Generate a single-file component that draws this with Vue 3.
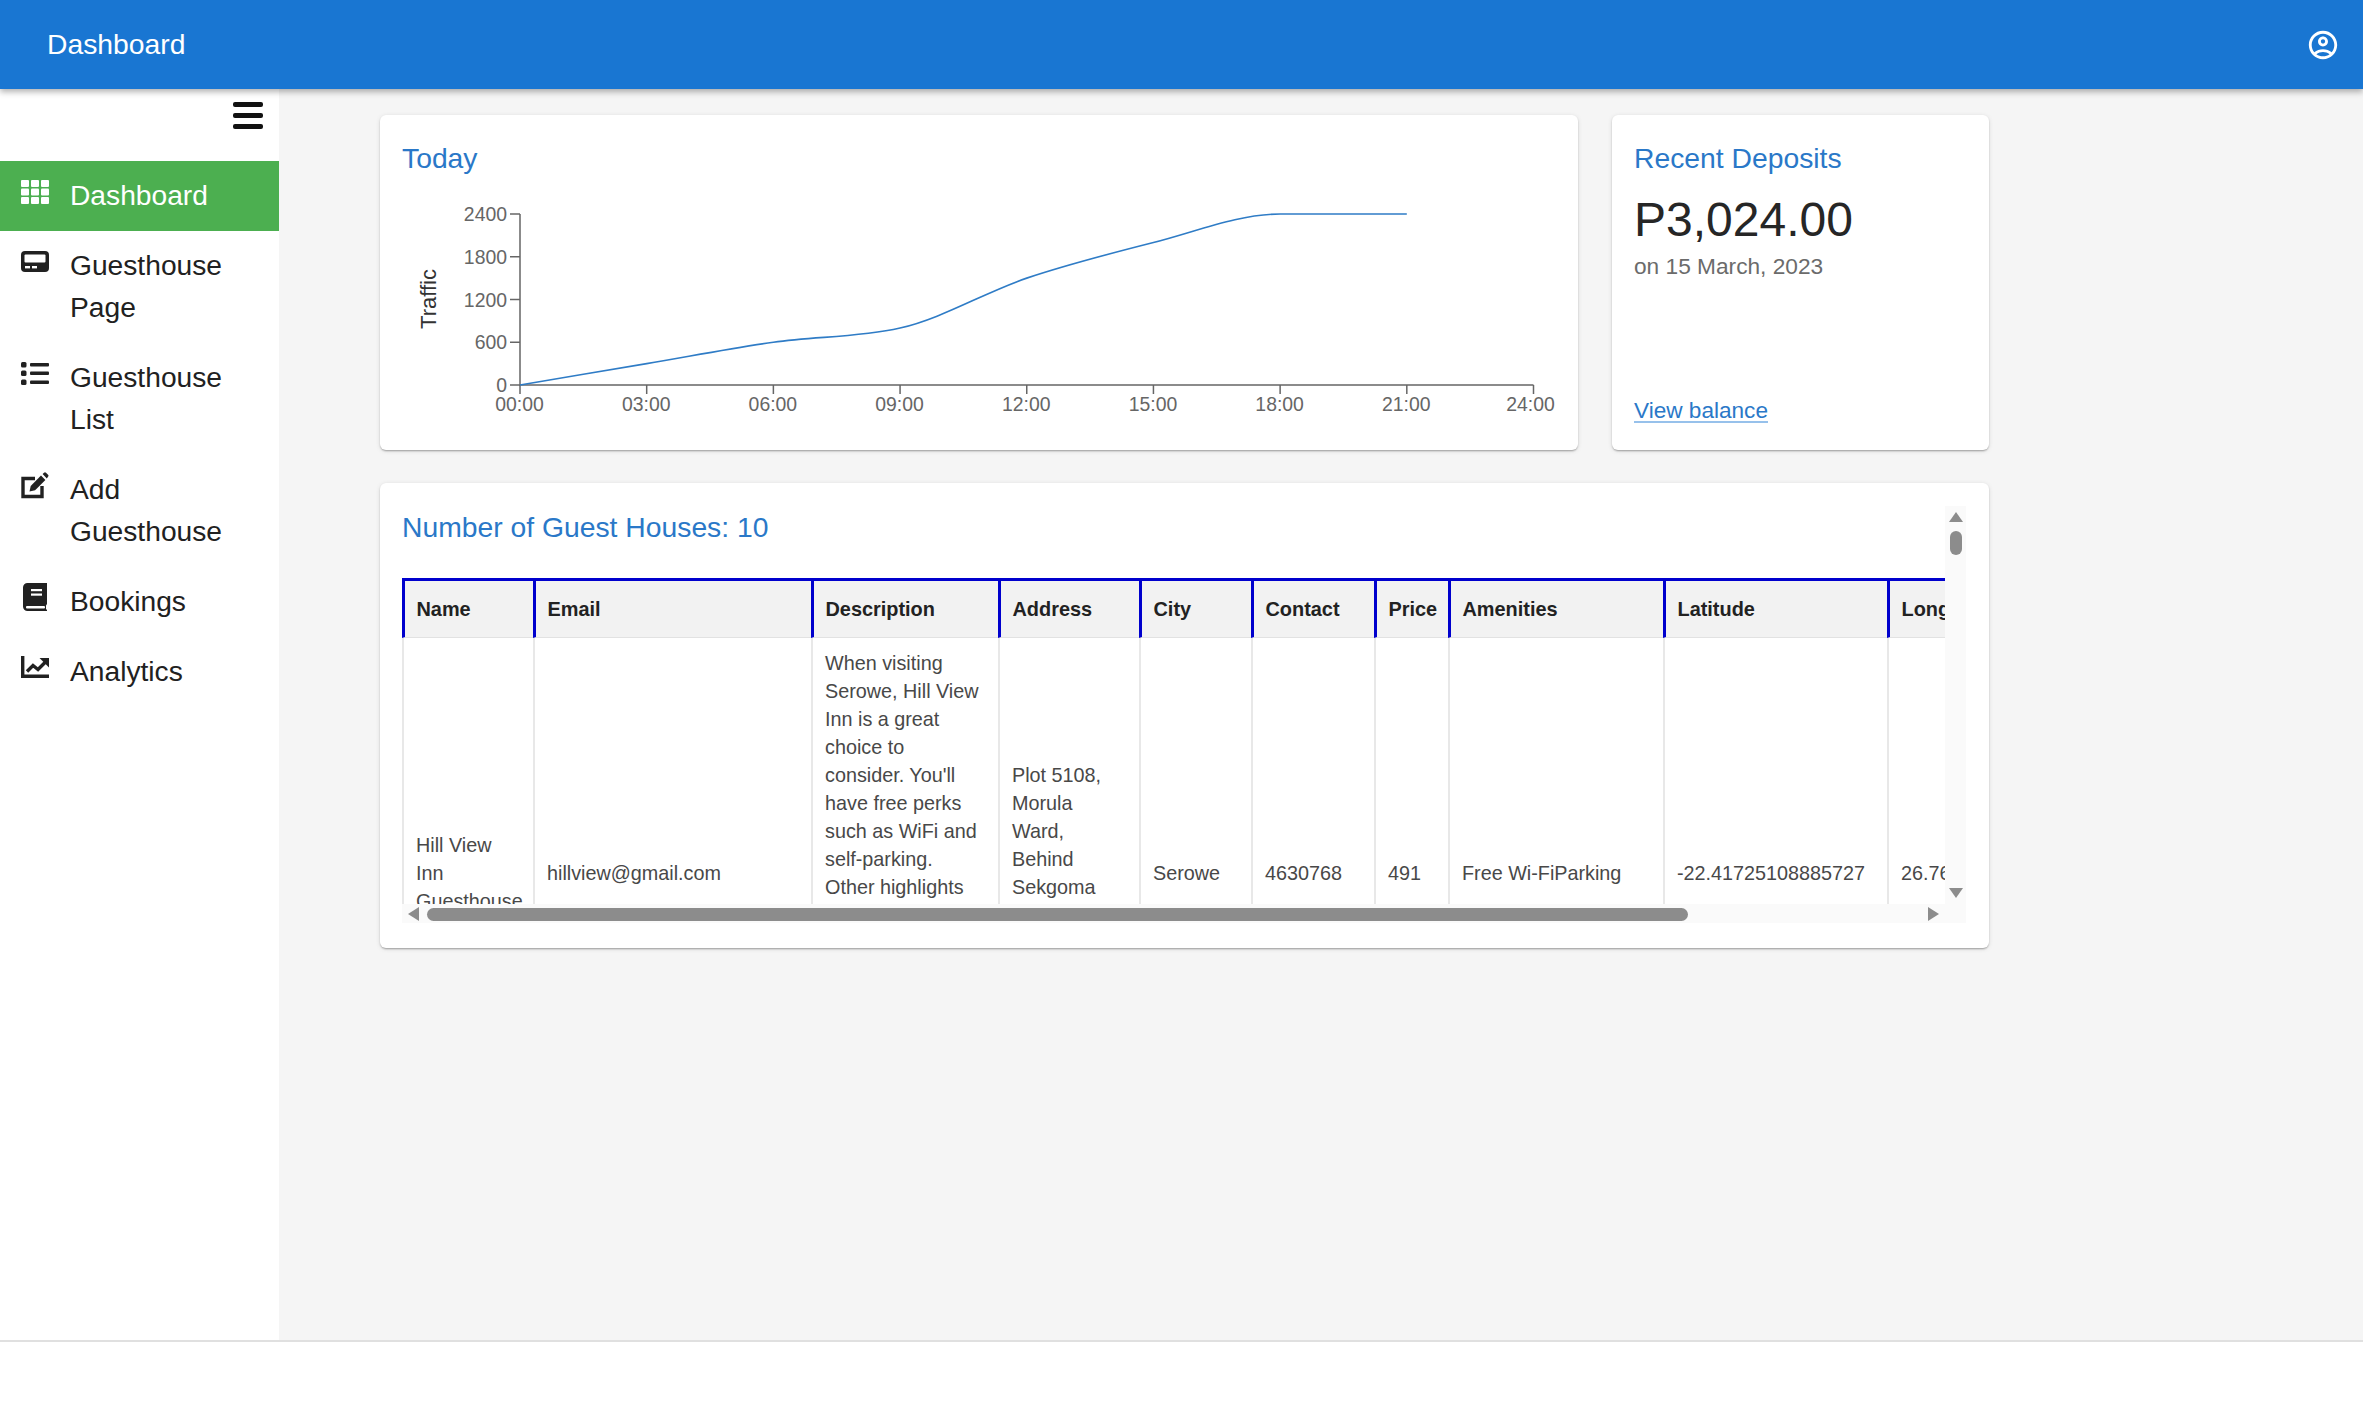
<template>
  <div class="page">
    <header class="topbar">
      <span class="topbar-title">Dashboard</span>
      <svg class="user-icon" viewBox="0 0 24 24" fill="#fff">
        <path d="M12 2C6.48 2 2 6.48 2 12s4.48 10 10 10 10-4.48 10-10S17.52 2 12 2zM7.35 18.5C8.66 17.56 10.26 17 12 17s3.34.56 4.65 1.5c-1.31.94-2.91 1.5-4.65 1.5s-3.34-.56-4.65-1.5zm10.79-1.38C16.45 15.8 14.32 15 12 15s-4.45.8-6.14 2.12C4.7 15.73 4 13.95 4 12c0-4.42 3.58-8 8-8s8 3.58 8 8c0 1.95-.7 3.73-1.86 5.12z" />
        <path d="M12 6c-1.93 0-3.5 1.57-3.5 3.5S10.07 13 12 13s3.5-1.57 3.5-3.5S13.93 6 12 6zm0 5c-.83 0-1.5-.67-1.5-1.5S11.17 8 12 8s1.5.67 1.5 1.5S12.83 11 12 11z" />
      </svg>
    </header>

    <div class="body">
      <aside class="sidebar">
        <div class="sidebar-toggle">
          <svg class="burger" viewBox="0 0 30 27" fill="#111">
            <rect x="0" y="0" width="30" height="5" rx="2" />
            <rect x="0" y="11" width="30" height="5" rx="2" />
            <rect x="0" y="22" width="30" height="5" rx="2" />
          </svg>
        </div>
        <nav>
          <a v-for="item in navItems" :key="item.label" class="nav-item" :class="{ active: item.active }">
            <svg class="nav-icon" viewBox="0 0 28 28" fill="currentColor">
              <template v-if="item.icon === 'grid'">
                <rect v-for="c in gridCells" :key="c.x + '-' + c.y" :x="c.x" :y="c.y" width="8" height="7" rx="1" />
              </template>
              <template v-else-if="item.icon === 'pager'">
                <rect x="0" y="4" width="28" height="21" rx="4" />
                <rect x="3.5" y="7.5" width="21" height="8" rx="1" fill="#fff" />
                <rect x="4" y="19" width="5" height="2.4" fill="#fff" />
                <rect x="11" y="19" width="5" height="2.4" fill="#fff" />
              </template>
              <template v-else-if="item.icon === 'list'">
                <rect x="0" y="3" width="5.5" height="5.5" rx="1.5" />
                <rect x="0" y="11.5" width="5.5" height="5.5" rx="1.5" />
                <rect x="0" y="20.5" width="5.5" height="5.5" rx="1.5" />
                <rect x="9" y="4" width="19" height="3.4" rx="1" />
                <rect x="9" y="12.6" width="19" height="3.4" rx="1" />
                <rect x="9" y="21.6" width="19" height="3.4" rx="1" />
              </template>
              <template v-else-if="item.icon === 'edit'">
                <path d="M14 7.5H2v18h19V15" fill="none" stroke="currentColor" stroke-width="3.4" />
                <path d="M8.5 20.5l1.2-5.6L20 4.6l4.4 4.4-10.3 10.3z" />
                <path d="M21.6 3l1.4-1.2a1.4 1.4 0 012 0l2 2a1.4 1.4 0 010 2L25.800 7.400z" />
              </template>
              <template v-else-if="item.icon === 'book'">
                <path d="M2 4.500A4.500 4.500 0 016.500 0H26v21l-1 1.500V26l1 1v1H6.500A4.500 4.500 0 012 23.500z" />
                <rect x="5" y="23" width="19" height="2.600" rx="1" fill="#fff" />
                <rect x="10" y="6" width="11" height="2.200" fill="#fff" />
                <rect x="10" y="10.500" width="11" height="2.200" fill="#fff" />
              </template>
              <template v-else>
                <path d="M1.700 3v20.300H28" fill="none" stroke="currentColor" stroke-width="3.400" />
                <path d="M6 18.500l6-6 5 4 8-8" fill="none" stroke="currentColor" stroke-width="3.400" />
                <path d="M18.500 5H28v9.500z" />
              </template>
            </svg>
            <span class="nav-label">{{ item.label }}</span>
          </a>
        </nav>
      </aside>

      <main class="content">
        <div class="top-row">
          <section class="card chart-card">
            <h2 class="card-title">Today</h2>
            <svg class="chart" viewBox="402 180 1154 250" width="1154" height="250">
              <g stroke="#666" stroke-width="1.500" fill="none">
                <path d="M520 214V385H1533.500" />
                <path v-for="t in yTicks" :key="'yt' + t.label" :d="`M510 ${t.y}H520`" />
                <path v-for="t in xTicks" :key="'xt' + t.label" :d="`M${t.x} 385V394`" />
              </g>
              <g class="tick-label" text-anchor="end">
                <text v-for="t in yTicks" :key="t.label" x="507" :y="t.y + 7">{{ t.label }}</text>
              </g>
              <g class="tick-label" text-anchor="middle">
                <text v-for="t in xTicks" :key="t.label" :x="t.labelX" y="411">{{ t.label }}</text>
              </g>
              <text class="axis-label" text-anchor="middle" transform="translate(436 299) rotate(-90)">Traffic</text>
              <path :d="linePath" fill="none" stroke="#2f7cc6" stroke-width="1.600" />
            </svg>
          </section>

          <section class="card deposit-card">
            <h2 class="card-title">Recent Deposits</h2>
            <div class="amount">P3,024.00</div>
            <div class="amount-date">on 15 March, 2023</div>
            <a class="balance-link">View balance</a>
          </section>
        </div>

        <section class="card guests-card">
          <div class="scroller">
            <div class="scroll-main">
              <h2 class="card-title guests-title">Number of Guest Houses: 10</h2>
              <div class="table-clip">
                <table class="guest-table">
                  <colgroup>
                    <col v-for="col in columns" :key="col.title" :style="{ width: col.width + 'px' }" />
                  </colgroup>
                  <thead>
                    <tr>
                      <th v-for="col in columns" :key="col.title">{{ col.title }}</th>
                    </tr>
                  </thead>
                  <tbody>
                    <tr v-for="row in rows" :key="row.email">
                      <td v-for="col in columns" :key="col.key">{{ row[col.key] }}</td>
                    </tr>
                  </tbody>
                </table>
              </div>
              <div class="hbar">
                <span class="arrow arrow-left"></span>
                <span class="hthumb"></span>
                <span class="arrow arrow-right"></span>
              </div>
            </div>
            <div class="vbar">
              <span class="arrow arrow-up"></span>
              <span class="vthumb"></span>
              <span class="arrow arrow-down"></span>
            </div>
          </div>
        </section>
      </main>
    </div>

    <footer class="footer"></footer>
  </div>
</template>

<script setup>
import { computed } from 'vue'

const navItems = [
  { label: 'Dashboard', icon: 'grid', active: true },
  { label: 'Guesthouse Page', icon: 'pager' },
  { label: 'Guesthouse List', icon: 'list' },
  { label: 'Add Guesthouse', icon: 'edit' },
  { label: 'Bookings', icon: 'book' },
  { label: 'Analytics', icon: 'chart' }
]

const gridCells = []
for (const y of [3, 11.5, 20]) {
  for (const x of [0, 10, 20]) gridCells.push({ x, y })
}

const columns = [
  { title: 'Name', key: 'name', width: 131 },
  { title: 'Email', key: 'email', width: 278 },
  { title: 'Description', key: 'description', width: 187 },
  { title: 'Address', key: 'address', width: 141 },
  { title: 'City', key: 'city', width: 112 },
  { title: 'Contact', key: 'contact', width: 123 },
  { title: 'Price', key: 'price', width: 74 },
  { title: 'Amenities', key: 'amenities', width: 215 },
  { title: 'Latitude', key: 'latitude', width: 224 },
  { title: 'Longitude', key: 'longitude', width: 200 }
]

const rows = [
  {
    name: 'Hill View Inn Guesthouse',
    email: 'hillview@gmail.com',
    description:
      "When visiting Serowe, Hill View Inn is a great choice to consider. You'll have free perks such as WiFi and self-parking. Other highlights include a restaurant, a bar and an outdoor pool. Guests can also enjoy room service and a daily breakfast.",
    address: 'Plot 5108, Morula Ward, Behind Sekgoma Memorial Hospital, Serowe',
    city: 'Serowe',
    contact: '4630768',
    price: '491',
    amenities: 'Free Wi-FiParking',
    latitude: '-22.41725108885727',
    longitude: '26.76842109'
  }
]

// chart scale, in page pixels because the svg viewBox starts at the card offset
const xAt = (hour) => 520 + (hour / 24) * 1013.5
const yAt = (value) => 385 - (value / 2400) * 171

const traffic = [
  [0, 0],
  [3, 300],
  [6, 600],
  [9, 800],
  [12, 1500],
  [15, 2000],
  [18, 2400],
  [21, 2400]
]

const xTicks = [0, 3, 6, 9, 12, 15, 18, 21, 24].map((h) => ({
  x: xAt(h),
  // the last label is pulled in so that it stays inside the plot box
  labelX: xAt(h) - (h === 24 ? 3 : 0.5),
  label: String(h).padStart(2, '0') + ':00'
}))

const yTicks = [0, 600, 1200, 1800, 2400].map((v) => ({ y: yAt(v), label: String(v) }))

// monotone cubic interpolation, same curve as recharts' "monotone" line
const linePath = computed(() => {
  const pts = traffic.map(([h, v]) => [xAt(h), yAt(v)])
  const n = pts.length
  const slopes = []
  for (let i = 0; i < n - 1; i++) {
    slopes.push((pts[i + 1][1] - pts[i][1]) / (pts[i + 1][0] - pts[i][0]))
  }
  const t = new Array(n).fill(0)
  for (let i = 1; i < n - 1; i++) {
    const h0 = pts[i][0] - pts[i - 1][0]
    const h1 = pts[i + 1][0] - pts[i][0]
    const p = (slopes[i - 1] * h1 + slopes[i] * h0) / (h0 + h1)
    t[i] =
      (Math.sign(slopes[i - 1]) + Math.sign(slopes[i])) *
      Math.min(Math.abs(slopes[i - 1]), Math.abs(slopes[i]), 0.5 * Math.abs(p))
  }
  t[0] = (3 * slopes[0] - t[1]) / 2
  t[n - 1] = (3 * slopes[n - 2] - t[n - 2]) / 2
  let d = `M${pts[0][0]} ${pts[0][1]}`
  for (let i = 0; i < n - 1; i++) {
    const dx = (pts[i + 1][0] - pts[i][0]) / 3
    d += `C${pts[i][0] + dx} ${pts[i][1] + dx * t[i]} ${pts[i + 1][0] - dx} ${pts[i + 1][1] - dx * t[i + 1]} ${pts[i + 1][0]} ${pts[i + 1][1]}`
  }
  return d
})
</script>

<style>
html,
body {
  margin: 0;
  background: #fff;
}
</style>

<style scoped>
.page {
  width: 2363px;
  height: 1410px;
  display: flex;
  flex-direction: column;
  overflow: hidden;
  font-family: "Liberation Sans", Arial, sans-serif;
  color: #212121;
}

.topbar {
  position: relative;
  z-index: 2;
  flex: none;
  height: 89px;
  display: flex;
  align-items: center;
  justify-content: space-between;
  padding: 0 23px 0 47px;
  background: #1976d2;
  color: #fff;
  box-shadow: 0 3px 6px rgba(0, 0, 0, 0.3);
}

.topbar-title {
  font-size: 28.300px;
}

.user-icon {
  width: 34px;
  height: 34px;
}

.body {
  flex: none;
  height: 1251px;
  display: flex;
  background: #f5f5f5;
}

.sidebar {
  flex: none;
  width: 279px;
  background: #fff;
}

.sidebar-toggle {
  height: 72px;
  display: flex;
  justify-content: flex-end;
  padding: 13px 16px 0 0;
  box-sizing: border-box;
}

.burger {
  width: 30px;
  height: 27px;
}

.nav-item {
  display: flex;
  align-items: flex-start;
  gap: 21px;
  padding: 13px 21px 15px;
  font-size: 28.200px;
  line-height: 42px;
  color: #212121;
}

.nav-item.active {
  background: #4caf50;
  color: #fff;
}

.nav-icon {
  flex: none;
  width: 28px;
  height: 28px;
  margin-top: 3px;
}

.content {
  flex: none;
  width: 1609px;
  margin-left: 101px;
  padding-top: 26px;
  display: flex;
  flex-direction: column;
  gap: 33px;
}

.top-row {
  display: flex;
  gap: 34px;
}

.card {
  box-sizing: border-box;
  padding: 22px;
  background: #fff;
  border-radius: 6px;
  box-shadow: 0 2px 2px -1px rgba(0, 0, 0, 0.2), 0 1px 2px rgba(0, 0, 0, 0.14), 0 1px 5px rgba(0, 0, 0, 0.1);
}

.card-title {
  margin: 0 0 2px;
  font-size: 28.300px;
  line-height: 42px;
  font-weight: 400;
  color: #2a78c8;
}

.chart-card {
  width: 1198px;
  height: 335px;
}

.chart {
  display: block;
  margin-top: -1px;
  overflow: visible;
}

.tick-label {
  font-size: 19.400px;
  fill: #666;
}

.axis-label {
  font-size: 22px;
  fill: #333;
}

.deposit-card {
  width: 377px;
  height: 335px;
  display: flex;
  flex-direction: column;
}

.amount {
  margin-top: 11px;
  font-size: 48px;
  line-height: 56px;
  color: #262626;
}

.amount-date {
  margin-top: 2px;
  font-size: 22.700px;
  line-height: 32px;
  color: #6b6b6b;
}

.balance-link {
  margin-top: auto;
  margin-bottom: 2px;
  font-size: 22.600px;
  line-height: 30px;
  color: #2a78c8;
  text-decoration: underline;
  text-decoration-color: rgba(25, 118, 210, 0.45);
  text-underline-offset: 3px;
}

.guests-card {
  width: 1609px;
  height: 465px;
  padding-top: 23px;
}

.scroller {
  height: 417px;
  display: flex;
}

.scroll-main {
  flex: none;
  width: 1543px;
}

.guests-title {
  margin-bottom: 30px;
}

.table-clip {
  height: 326px;
  overflow: hidden;
}

.guest-table {
  width: 1685px;
  table-layout: fixed;
  border-collapse: separate;
  border-spacing: 0;
  font-size: 19.800px;
  line-height: 28px;
}

.guest-table th {
  box-sizing: border-box;
  height: 60px;
  padding: 0 11.500px;
  border-top: 3px solid #0000cd;
  border-left: 3px solid #0000cd;
  border-bottom: 1px solid #e2e2e2;
  background: #f2f2f2;
  color: #222;
  font-size: 19.900px;
  font-weight: 700;
  text-align: left;
  white-space: nowrap;
  overflow: hidden;
}

.guest-table td {
  padding: 11px 12px;
  border-left: 2px solid #e8e8e8;
  color: #484848;
  vertical-align: middle;
}

.hbar {
  height: 19px;
  box-sizing: border-box;
  display: flex;
  align-items: center;
  padding: 1px 6px 0;
  background: #fafafa;
}

.hthumb {
  width: 1261px;
  height: 13px;
  margin-left: 8px;
  border-radius: 7px;
  background: #8c8c8c;
}

.vbar {
  flex: none;
  width: 21px;
  display: flex;
  flex-direction: column;
  align-items: center;
  padding-top: 6px;
  box-sizing: border-box;
  background: #fafafa;
}

.vthumb {
  width: 12px;
  height: 24px;
  margin-top: 9px;
  border-radius: 6px;
  background: #8c8c8c;
}

.arrow {
  flex: none;
  width: 0;
  height: 0;
  border-style: solid;
  border-color: transparent;
}

.arrow-left {
  border-width: 7px 11px 7px 0;
  border-right-color: #8c8c8c;
}

.arrow-right {
  margin-left: auto;
  margin-right: 0;
  border-width: 7px 0 7px 11px;
  border-left-color: #8c8c8c;
}

.arrow-up {
  border-width: 0 7px 10px;
  border-bottom-color: #8c8c8c;
}

.arrow-down {
  margin-top: 333px;
  border-width: 10px 7px 0;
  border-top-color: #8c8c8c;
}

.footer {
  flex: 1;
  border-top: 2px solid #e0e0e0;
  background: #fff;
}
</style>
